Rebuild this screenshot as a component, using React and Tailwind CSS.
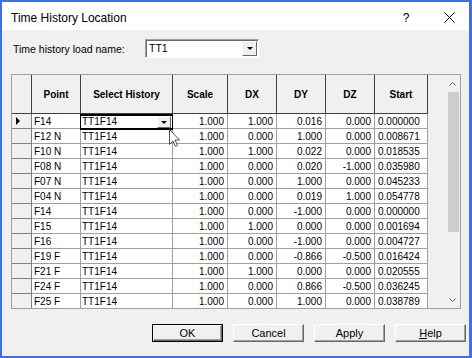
import React from 'react';

const rows = [
  ['F14', 'TT1F14', '1.000', '1.000', '0.016', '0.000', '0.000000'],
  ['F12 N', 'TT1F14', '1.000', '0.000', '1.000', '0.000', '0.008671'],
  ['F10 N', 'TT1F14', '1.000', '1.000', '0.022', '0.000', '0.018535'],
  ['F08 N', 'TT1F14', '1.000', '0.000', '0.020', '-1.000', '0.035980'],
  ['F07 N', 'TT1F14', '1.000', '0.000', '1.000', '0.000', '0.045233'],
  ['F04 N', 'TT1F14', '1.000', '0.000', '0.019', '1.000', '0.054778'],
  ['F14', 'TT1F14', '1.000', '0.000', '-1.000', '0.000', '0.000000'],
  ['F15', 'TT1F14', '1.000', '1.000', '0.000', '0.000', '0.001694'],
  ['F16', 'TT1F14', '1.000', '0.000', '-1.000', '0.000', '0.004727'],
  ['F19 F', 'TT1F14', '1.000', '0.000', '-0.866', '-0.500', '0.016424'],
  ['F21 F', 'TT1F14', '1.000', '1.000', '0.000', '0.000', '0.020555'],
  ['F24 F', 'TT1F14', '1.000', '0.000', '0.866', '-0.500', '0.036245'],
  ['F25 F', 'TT1F14', '1.000', '0.000', '1.000', '0.000', '0.038789'],
];

function DownTri() {
  return (
    <div className="w-0 h-0 border-l-[3px] border-r-[3px] border-t-[3px] border-l-transparent border-r-transparent border-t-black" />
  );
}

function Button({ children, def }) {
  return (
    <div className={`w-[71px] h-[18px] ${def ? 'border border-black' : ''} flex`}>
      <div className="flex-1 bg-[#f0f0f0] border-t border-l border-t-white border-l-white border-b border-r border-b-[#696969] border-r-[#696969] shadow-[inset_-1px_-1px_0_#a0a0a0] flex items-center justify-center text-[11px] leading-none">
        {children}
      </div>
    </div>
  );
}

const dataCell = 'border-r border-b border-[#a0a0a0] bg-white text-[10px] leading-[15px] whitespace-nowrap overflow-hidden';

export default function App() {
  return (
    <div className="w-[472px] h-[358px] bg-[#3e6fe3] pt-[2px] pl-[2px] pr-[3px] pb-[2px] font-['Liberation_Sans',Arial,sans-serif] text-black">
      <div className="w-full h-full flex flex-col bg-[#f0f0f0]">
        {/* Title bar */}
        <div className="h-[28px] bg-white flex items-center shrink-0 pt-[3px]">
          <span className="pl-[9px] text-[12px] text-[#000]">Time History Location</span>
          <div className="ml-auto flex h-full">
            <div className="w-[46px] flex items-center justify-center text-[12px]">?</div>
            <div className="w-[40px] flex items-center justify-center">
              <svg width="11" height="11" viewBox="0 0 11 11">
                <path d="M0.5 0.5 L10.5 10.5 M10.5 0.5 L0.5 10.5" stroke="#000" strokeWidth="1" fill="none" />
              </svg>
            </div>
          </div>
        </div>

        {/* Body */}
        <div className="flex-1 flex flex-col pl-[9px] pr-[9px]">
          <div className="flex items-center pt-[9px] h-[28px]">
            <span className="w-[134px] h-[19px] pl-[2px] text-[10.5px] leading-[19px] pt-[1px]">Time history load name:</span>
            <div className="w-[114px] h-[19px] border-t border-l border-t-[#a0a0a0] border-l-[#a0a0a0] border-b border-r border-b-white border-r-white shadow-[inset_1px_1px_0_#696969] bg-white flex items-center">
              <span className="pl-[3px] text-[10.5px] flex-1 pt-[1px]">TT1</span>
              <div className="w-[15px] h-[15px] mr-[1px] bg-[#f0f0f0] border-t border-l border-t-white border-l-white border-b border-r border-b-[#696969] border-r-[#696969] flex items-center justify-center">
                <DownTri />
              </div>
            </div>
          </div>

          {/* Grid */}
          <div className="relative mt-[16px] w-[450px] h-[235px] border border-[#a0a0a0] bg-[#f0f0f0] flex overflow-hidden">
            <div className="flex-1 flex flex-col overflow-hidden">
              {/* header */}
              <div className="flex h-[39px] shrink-0 text-[10px] font-bold">
                <div className="w-[20px] border-r border-b border-[#404040]" />
                <div className="w-[49px] border-r border-b border-[#404040] flex items-center justify-center">Point</div>
                <div className="w-[92px] border-r border-b border-[#404040] flex items-center justify-center">Select History</div>
                <div className="w-[55px] border-r border-b border-[#404040] flex items-center justify-center">Scale</div>
                <div className="w-[49px] border-r border-b border-[#404040] flex items-center justify-center">DX</div>
                <div className="w-[49px] border-r border-b border-[#404040] flex items-center justify-center">DY</div>
                <div className="w-[49px] border-r border-b border-[#404040] flex items-center justify-center">DZ</div>
                <div className="w-[53px] border-r border-b border-[#404040] flex items-center justify-center">Start</div>
              </div>
              {rows.map((r, i) => (
                <div key={i} className="flex h-[15px] shrink-0">
                  <div className="w-[20px] border-r border-b border-[#808080] bg-[#f0f0f0] flex items-center pl-[4px]">
                    {i === 0 && (
                      <div className="w-0 h-0 border-t-[4px] border-b-[4px] border-l-[4px] border-t-transparent border-b-transparent border-l-black" />
                    )}
                  </div>
                  <div className={`w-[49px] pl-[2px] ${dataCell}`}>{r[0]}</div>
                  <div className={`relative w-[92px] pl-[1px] ${dataCell} ${i === 0 ? 'overflow-visible' : ''}`}>
                    {r[1]}
                    {i === 0 && (
                      <div className="absolute left-[-1px] top-0 w-[93px] h-[16px] border-y-2 border-x border-black bg-white flex items-center z-10">
                        <span className="pl-[1px] flex-1 leading-[12px]">TT1F14</span>
                        <div className="w-[14px] h-[12px] mr-[1px] bg-[#f0f0f0] border-t border-l border-t-white border-l-white border-b border-r border-b-[#696969] border-r-[#696969] flex items-center justify-center">
                          <DownTri />
                        </div>
                      </div>
                    )}
                  </div>
                  <div className={`w-[55px] pr-[3px] text-right ${dataCell}`}>{r[2]}</div>
                  <div className={`w-[49px] pr-[3px] text-right ${dataCell}`}>{r[3]}</div>
                  <div className={`w-[49px] pr-[3px] text-right ${dataCell}`}>{r[4]}</div>
                  <div className={`w-[49px] pr-[3px] text-right ${dataCell}`}>{r[5]}</div>
                  <div className={`w-[53px] pl-[3px] ${dataCell}`}>{r[6]}</div>
                </div>
              ))}
            </div>
            {/* scrollbar */}
            <div className="w-[15px] flex flex-col shrink-0">
              <div className="h-[17px] flex items-center justify-center">
                <svg width="7" height="4" viewBox="0 0 7 4">
                  <path d="M0.5 3.5 L3.5 0.5 L6.5 3.5" stroke="#606060" strokeWidth="1" fill="none" />
                </svg>
              </div>
              <div className="flex-1 flex flex-col">
                <div className="h-[140px] ml-[3px] mr-[1px] bg-[#cdcdcd]" />
              </div>
              <div className="h-[17px] flex items-center justify-center">
                <svg width="7" height="4" viewBox="0 0 7 4">
                  <path d="M0.5 0.5 L3.5 3.5 L6.5 0.5" stroke="#606060" strokeWidth="1" fill="none" />
                </svg>
              </div>
            </div>

            {/* mouse cursor */}
            <svg className="absolute left-[157px] top-[54px] z-20" width="12" height="19" viewBox="0 0 12 19">
              <path d="M0.5 0.5 L0.5 15.5 L4 12 L6.5 17.5 L8.5 16.5 L6 11 L10.5 11 Z" fill="#fff" stroke="#505050" strokeWidth="1" />
            </svg>
          </div>

          {/* Buttons */}
          <div className="flex justify-end gap-[10px] mt-[15px] -mr-[6px]">
            <Button def>OK</Button>
            <Button>Cancel</Button>
            <Button>Apply</Button>
            <Button>
              <span><span className="underline">H</span>elp</span>
            </Button>
          </div>
        </div>
      </div>
    </div>
  );
}
